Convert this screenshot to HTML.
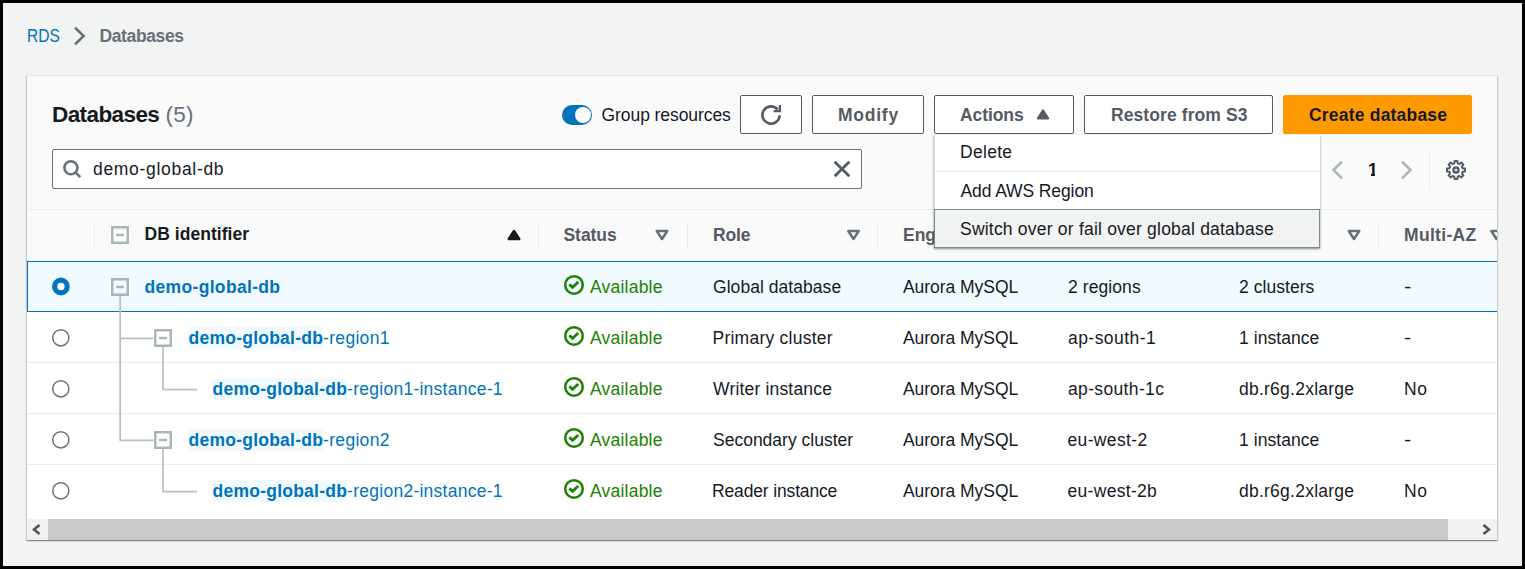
<!DOCTYPE html>
<html>
<head>
<meta charset="utf-8">
<title>RDS Databases</title>
<style>
*{box-sizing:border-box;margin:0;padding:0}
html,body{width:1525px;height:569px;overflow:hidden;background:#000}
body{font-family:"Liberation Sans",sans-serif;font-size:17.5px;color:#16191f;position:relative}
.abs,.abs>*{position:absolute}
#page{position:absolute;left:3px;top:3px;width:1519px;height:563px;background:#f2f3f3;overflow:hidden}
/* coordinates inside #wrap are page coordinates (wrap offset -3,-3) */
#wrap{position:absolute;left:-3px;top:-3px;width:1525px;height:569px}
#wrap *{position:absolute;white-space:nowrap}
.t{line-height:20px;height:20px}
.b{font-weight:700}
#panel{left:27px;top:75px;width:1470px;height:465px;background:#fff;border-top:1px solid #e6e9ea;box-shadow:0 1px 1px 0 rgba(0,28,36,.3),1px 1px 1px 0 rgba(0,28,36,.15),-1px 1px 1px 0 rgba(0,28,36,.15);overflow:hidden}
#phead{left:0;top:0;width:1470px;height:186px;background:#fafafa}
.btn{height:39px;top:95px;border:1px solid #545b64;border-radius:2px;background:#fff;color:#545b64;font-weight:700}
.sep{width:1px;background:#eaeded;top:222px;height:27px}
.row{left:27px;width:1470px;height:51px;border-bottom:1px solid #eaeded}
.link{color:#0073bb}
.hl{position:static !important;background:#f1faff;font-weight:700;letter-spacing:0.24px;padding:1px 0 1px 1px;margin-left:-1px}
.rg{position:static !important;letter-spacing:0.3px}
.ri{position:static !important;letter-spacing:0.26px}
.grn{color:#1d8102}
.hd{color:#545b64;font-weight:700}
</style>
</head>
<body>
<div id="page"><div id="wrap">

<!-- breadcrumb -->
<div class="t link" style="left:27.3px;top:26px;transform:scaleX(0.89);transform-origin:0 0">RDS</div>
<svg style="left:73px;top:26px" width="14" height="20" viewBox="0 0 14 20"><path d="M2 1.6 L10.6 10 L2 18.4" fill="none" stroke="#687078" stroke-width="2.6"/></svg>
<div class="t b" style="left:99.5px;top:26px;color:#687078;letter-spacing:-0.38px">Databases</div>

<!-- panel -->
<div id="panel">
  <div id="phead"></div>
</div>

<!-- header -->
<div class="b" style="left:52px;top:101px;font-size:22.5px;line-height:28px;letter-spacing:-0.59px">Databases<span style="position:static;font-weight:400;color:#687078;letter-spacing:0.2px;margin-left:6.3px">(5)</span></div>

<!-- toggle -->
<div style="left:562px;top:105px;width:30px;height:20px;border-radius:10px;background:#0073bb"></div>
<div style="left:575px;top:107px;width:16px;height:16px;border-radius:8px;background:#fff"></div>
<div class="t" style="left:601.5px;top:105px;letter-spacing:-0.07px">Group resources</div>

<!-- buttons -->
<div class="btn" style="left:740px;width:62px"></div>
<svg style="left:740px;top:95px" width="62" height="39" viewBox="0 0 62 39"><path d="M39.65 20.3 A8.65 8.65 0 1 1 37.6 14.4" fill="none" stroke="#545b64" stroke-width="2.6"/><path d="M39.9 9.9 V16.1 H33.6" fill="none" stroke="#545b64" stroke-width="2.4" stroke-linejoin="miter"/></svg>
<div class="btn" style="left:812px;width:112px"></div>
<div class="t hd" style="left:838px;top:105px;letter-spacing:0.75px">Modify</div>
<div class="btn" style="left:934px;width:140px"></div>
<div class="t hd" style="left:960px;top:105px;letter-spacing:-0.08px">Actions</div>
<svg style="left:1036px;top:108px" width="14" height="13" viewBox="0 0 14 13"><path d="M2 10.3 H12 L7 2.6 Z" fill="#545b64" stroke="#545b64" stroke-width="2.4" stroke-linejoin="round"/></svg>
<div class="btn" style="left:1084px;width:189px"></div>
<div class="t hd" style="left:1111px;top:105px;letter-spacing:0.09px">Restore from S3</div>
<div class="btn" style="left:1283px;width:189px;background:#ff9900;border-color:#ff9900"></div>
<div class="t b" style="left:1309px;top:105px;color:#16191f;letter-spacing:0.2px">Create database</div>

<!-- search -->
<div style="left:52px;top:149px;width:810px;height:40px;border:1px solid #687078;border-radius:2px;background:#fff"></div>
<svg style="left:62px;top:159px" width="21" height="21" viewBox="0 0 21 21"><circle cx="8.9" cy="8.8" r="6.5" fill="none" stroke="#687078" stroke-width="2.6"/><path d="M13.5 13.3 L18.3 18.1" stroke="#687078" stroke-width="2.6"/></svg>
<div class="t" style="left:93px;top:159px;letter-spacing:0.69px">demo-global-db</div>
<svg style="left:833px;top:160px" width="18" height="18" viewBox="0 0 18 18"><path d="M1.7 1.7 L16.3 16.3 M16.3 1.7 L1.7 16.3" stroke="#545b64" stroke-width="2.8"/></svg>

<!-- pagination -->
<svg style="left:1330px;top:159px" width="15" height="22" viewBox="0 0 15 22"><path d="M12 2.6 L3.5 11 L12 19.4" fill="none" stroke="#aab7b8" stroke-width="2.6"/></svg>
<div class="t b" style="left:1368px;top:160px">1</div><div style="left:1366px;top:174px;width:5px;height:3px;background:#fafafa"></div><div style="left:1375px;top:174px;width:5px;height:3px;background:#fafafa"></div>
<svg style="left:1400px;top:159px" width="15" height="22" viewBox="0 0 15 22"><path d="M2 2.6 L10.5 11 L2 19.4" fill="none" stroke="#aab7b8" stroke-width="2.6"/></svg>
<div style="left:1429px;top:150px;width:1px;height:39px;background:#eaeded"></div>
<svg style="left:1445px;top:159px" width="22" height="22" viewBox="0 0 22 22"><path d="M9.58 2.01 L12.42 2.01 L12.73 4.32 L14.50 5.05 L16.35 3.64 L18.36 5.65 L16.95 7.50 L17.68 9.27 L19.99 9.58 L19.99 12.42 L17.68 12.73 L16.95 14.50 L18.36 16.35 L16.35 18.36 L14.50 16.95 L12.73 17.68 L12.42 19.99 L9.58 19.99 L9.27 17.68 L7.50 16.95 L5.65 18.36 L3.64 16.35 L5.05 14.50 L4.32 12.73 L2.01 12.42 L2.01 9.58 L4.32 9.27 L5.05 7.50 L3.64 5.65 L5.65 3.64 L7.50 5.05 L9.27 4.32 Z" fill="none" stroke="#545b64" stroke-width="2" stroke-linejoin="round"/><circle cx="11" cy="11" r="2.5" fill="none" stroke="#545b64" stroke-width="2.4"/></svg>

<!-- column header -->
<div style="left:27px;top:209px;width:1470px;height:1px;background:#eaeded"></div>
<div style="left:27px;top:210px;width:1470px;height:51px;background:#fafafa"></div>
<div class="sep" style="left:94px"></div>
<div class="sep" style="left:538px"></div>
<div class="sep" style="left:687px"></div>
<div class="sep" style="left:877px"></div>
<div class="sep" style="left:1378px"></div>
<svg style="left:111px;top:226px" width="18" height="18" viewBox="0 0 18 18"><rect x="1.25" y="1.25" width="15.5" height="15.5" fill="none" stroke="#aab7b8" stroke-width="2.5"/><path d="M5 9 H13" stroke="#aab7b8" stroke-width="2.4"/></svg>
<div class="t b" style="left:144.5px;top:224px;letter-spacing:0.04px">DB identifier</div>
<svg style="left:507px;top:229px" width="14" height="12" viewBox="0 0 14 12"><path d="M1.75 10 H12.25 L7 1.95 Z" fill="#16191f" stroke="#16191f" stroke-width="2.5" stroke-linejoin="round"/></svg>
<div class="t hd" style="left:563.5px;top:225px;letter-spacing:-0.05px">Status</div>
<svg style="left:655px;top:229px" width="14" height="12" viewBox="0 0 14 12"><path d="M1.75 2 H12.25 L7 10.05 Z" fill="none" stroke="#687078" stroke-width="2.5" stroke-linejoin="round"/></svg>
<div class="t hd" style="left:713px;top:225px;letter-spacing:-0.17px">Role</div>
<svg style="left:846px;top:229px" width="15" height="12" viewBox="0 0 15 12"><path d="M2.25 2 H12.75 L7.5 10.05 Z" fill="none" stroke="#687078" stroke-width="2.5" stroke-linejoin="round"/></svg>
<div class="t hd" style="left:903px;top:225px;letter-spacing:0px">Engine</div>
<div class="t hd" style="left:1068px;top:225px">Region &amp; AZ</div>
<div class="t hd" style="left:1239px;top:225px">Size</div>
<svg style="left:1347px;top:229px" width="14" height="12" viewBox="0 0 14 12"><path d="M1.75 2 H12.25 L7 10.05 Z" fill="none" stroke="#687078" stroke-width="2.5" stroke-linejoin="round"/></svg>
<div class="t hd" style="left:1404px;top:225px;letter-spacing:0.32px">Multi-AZ</div>
<svg style="left:1489px;top:229px" width="8" height="12" viewBox="0 0 8 12"><path d="M2.25 2 H12.75 L7.5 10.05 Z" fill="none" stroke="#687078" stroke-width="2.5" stroke-linejoin="round"/></svg>

<!-- rows -->
<div class="row" style="top:261px;background:#f1faff;border:1px solid #0073bb;border-right:0"></div>
<div class="row" style="top:312px"></div>
<div class="row" style="top:363px"></div>
<div class="row" style="top:414px"></div>
<div class="row" style="top:465px;border-bottom:0"></div>

<!-- tree lines -->
<svg style="left:0;top:0" width="1525" height="569" viewBox="0 0 1525 569"><g fill="none" stroke="#b6c1c2" stroke-width="1.7" stroke-linejoin="round">
<path d="M120.2 295 V440.3 H153.5"/><path d="M120.2 338.3 H153.5"/>
<path d="M163 347 V389.6 H197"/><path d="M163 449 V491.6 H197"/>
</g></svg>

<!-- radios -->
<svg style="left:0;top:0" width="1525" height="569" viewBox="0 0 1525 569"><circle cx="60.9" cy="286.5" r="6.3" fill="#fff" stroke="#0073bb" stroke-width="5.2"/><circle cx="60.8" cy="337.8" r="8.1" fill="#fff" stroke="#687078" stroke-width="1.5"/><circle cx="60.8" cy="388.8" r="8.1" fill="#fff" stroke="#687078" stroke-width="1.5"/><circle cx="60.8" cy="439.8" r="8.1" fill="#fff" stroke="#687078" stroke-width="1.5"/><circle cx="60.8" cy="490.8" r="8.1" fill="#fff" stroke="#687078" stroke-width="1.5"/></svg>

<!-- expand icons -->
<svg style="left:111px;top:278px" width="18" height="18" viewBox="0 0 18 18"><rect x="1.25" y="1.25" width="15.5" height="15.5" fill="none" stroke="#aab7b8" stroke-width="2.5"/><path d="M5 9 H13" stroke="#aab7b8" stroke-width="2.4"/></svg>
<svg style="left:154px;top:329px" width="18" height="18" viewBox="0 0 18 18"><rect x="1.25" y="1.25" width="15.5" height="15.5" fill="none" stroke="#aab7b8" stroke-width="2.5"/><path d="M5 9 H13" stroke="#aab7b8" stroke-width="2.4"/></svg>
<svg style="left:154px;top:431px" width="18" height="18" viewBox="0 0 18 18"><rect x="1.25" y="1.25" width="15.5" height="15.5" fill="none" stroke="#aab7b8" stroke-width="2.5"/><path d="M5 9 H13" stroke="#aab7b8" stroke-width="2.4"/></svg>

<!-- identifiers -->
<div class="t link b" style="left:144.5px;top:277px;letter-spacing:0.33px">demo-global-db</div>
<div class="t link" style="left:188.5px;top:328px"><span class="hl">demo-global-db</span><span class="rg">-region1</span></div>
<div class="t link" style="left:212.5px;top:379px"><span class="hl">demo-global-db</span><span class="ri">-region1-instance-1</span></div>
<div class="t link" style="left:188.5px;top:430px"><span class="hl">demo-global-db</span><span class="rg">-region2</span></div>
<div class="t link" style="left:212.5px;top:481px"><span class="hl">demo-global-db</span><span class="ri">-region2-instance-1</span></div>

<!-- cells -->
<svg style="left:563px;top:274px" width="22" height="22" viewBox="0 0 22 22"><circle cx="11" cy="10.9" r="8.75" fill="none" stroke="#1d8102" stroke-width="2.5"/><path d="M6.4 10.4 L9.6 13.3 L15.2 7.9" fill="none" stroke="#1d8102" stroke-width="2.8"/></svg>
<div class="t grn" style="left:590px;top:277px;letter-spacing:0.22px">Available</div>
<div class="t" style="left:713px;top:277px;letter-spacing:0.05px">Global database</div>
<div class="t" style="left:903px;top:277px;letter-spacing:-0.05px">Aurora MySQL</div>
<div class="t" style="left:1068px;top:277px;letter-spacing:0.08px">2 regions</div>
<div class="t" style="left:1239px;top:277px;letter-spacing:0.05px">2 clusters</div>
<div class="t" style="left:1404px;top:277px;transform:scaleX(1.25);transform-origin:0 0">-</div>
<svg style="left:563px;top:325px" width="22" height="22" viewBox="0 0 22 22"><circle cx="11" cy="10.9" r="8.75" fill="none" stroke="#1d8102" stroke-width="2.5"/><path d="M6.4 10.4 L9.6 13.3 L15.2 7.9" fill="none" stroke="#1d8102" stroke-width="2.8"/></svg>
<div class="t grn" style="left:590px;top:328px;letter-spacing:0.22px">Available</div>
<div class="t" style="left:712.5px;top:328px;letter-spacing:0.24px">Primary cluster</div>
<div class="t" style="left:903px;top:328px;letter-spacing:-0.05px">Aurora MySQL</div>
<div class="t" style="left:1068px;top:328px;letter-spacing:0.45px">ap-south-1</div>
<div class="t" style="left:1239px;top:328px;letter-spacing:0.06px">1 instance</div>
<div class="t" style="left:1404px;top:328px;transform:scaleX(1.25);transform-origin:0 0">-</div>
<svg style="left:563px;top:376px" width="22" height="22" viewBox="0 0 22 22"><circle cx="11" cy="10.9" r="8.75" fill="none" stroke="#1d8102" stroke-width="2.5"/><path d="M6.4 10.4 L9.6 13.3 L15.2 7.9" fill="none" stroke="#1d8102" stroke-width="2.8"/></svg>
<div class="t grn" style="left:590px;top:379px;letter-spacing:0.22px">Available</div>
<div class="t" style="left:713px;top:379px;letter-spacing:0.18px">Writer instance</div>
<div class="t" style="left:903px;top:379px;letter-spacing:-0.05px">Aurora MySQL</div>
<div class="t" style="left:1068px;top:379px;letter-spacing:0.35px">ap-south-1c</div>
<div class="t" style="left:1239px;top:379px;letter-spacing:0.24px">db.r6g.2xlarge</div>
<div class="t" style="left:1404px;top:379px;letter-spacing:0.5px">No</div>
<svg style="left:563px;top:427px" width="22" height="22" viewBox="0 0 22 22"><circle cx="11" cy="10.9" r="8.75" fill="none" stroke="#1d8102" stroke-width="2.5"/><path d="M6.4 10.4 L9.6 13.3 L15.2 7.9" fill="none" stroke="#1d8102" stroke-width="2.8"/></svg>
<div class="t grn" style="left:590px;top:430px;letter-spacing:0.22px">Available</div>
<div class="t" style="left:713px;top:430px;letter-spacing:0.0px">Secondary cluster</div>
<div class="t" style="left:903px;top:430px;letter-spacing:-0.05px">Aurora MySQL</div>
<div class="t" style="left:1067.5px;top:430px;letter-spacing:0.35px">eu-west-2</div>
<div class="t" style="left:1239px;top:430px;letter-spacing:0.06px">1 instance</div>
<div class="t" style="left:1404px;top:430px;transform:scaleX(1.25);transform-origin:0 0">-</div>
<svg style="left:563px;top:478px" width="22" height="22" viewBox="0 0 22 22"><circle cx="11" cy="10.9" r="8.75" fill="none" stroke="#1d8102" stroke-width="2.5"/><path d="M6.4 10.4 L9.6 13.3 L15.2 7.9" fill="none" stroke="#1d8102" stroke-width="2.8"/></svg>
<div class="t grn" style="left:590px;top:481px;letter-spacing:0.22px">Available</div>
<div class="t" style="left:712px;top:481px;letter-spacing:-0.15px">Reader instance</div>
<div class="t" style="left:903px;top:481px;letter-spacing:-0.05px">Aurora MySQL</div>
<div class="t" style="left:1067.5px;top:481px;letter-spacing:0.3px">eu-west-2b</div>
<div class="t" style="left:1239px;top:481px;letter-spacing:0.24px">db.r6g.2xlarge</div>
<div class="t" style="left:1404px;top:481px;letter-spacing:0.5px">No</div>

<!-- scrollbar -->
<div style="left:27px;top:519px;width:1470px;height:21px;background:#f1f1f1"></div>
<div style="left:48px;top:519px;width:1400px;height:21px;background:#c9c9c9"></div>
<svg style="left:32px;top:524px" width="9" height="11" viewBox="0 0 9 11"><path d="M7.5 1 L2 5.5 L7.5 10" fill="none" stroke="#505050" stroke-width="2.5"/></svg>
<svg style="left:1482px;top:524px" width="9" height="11" viewBox="0 0 9 11"><path d="M1.5 1 L7 5.5 L1.5 10" fill="none" stroke="#505050" stroke-width="2.5"/></svg>

<!-- dropdown -->
<div style="left:934px;top:135px;width:386px;height:113px;background:#fff;box-shadow:0 1px 2px 0 rgba(0,28,36,.5);border-left:1px solid #d5dbdb"></div>
<div style="left:935px;top:171px;width:385px;height:1px;background:#eaeded"></div>
<div style="left:934px;top:209px;width:386px;height:39px;background:#f2f3f3;border:1px solid #7f8c8d"></div>
<div class="t" style="left:960px;top:141.5px;letter-spacing:0.3px">Delete</div>
<div class="t" style="left:960.5px;top:181px;letter-spacing:-0.1px">Add AWS Region</div>
<div class="t" style="left:960px;top:219px;letter-spacing:0.21px">Switch over or fail over global database</div>

</div></div>
</body>
</html>
